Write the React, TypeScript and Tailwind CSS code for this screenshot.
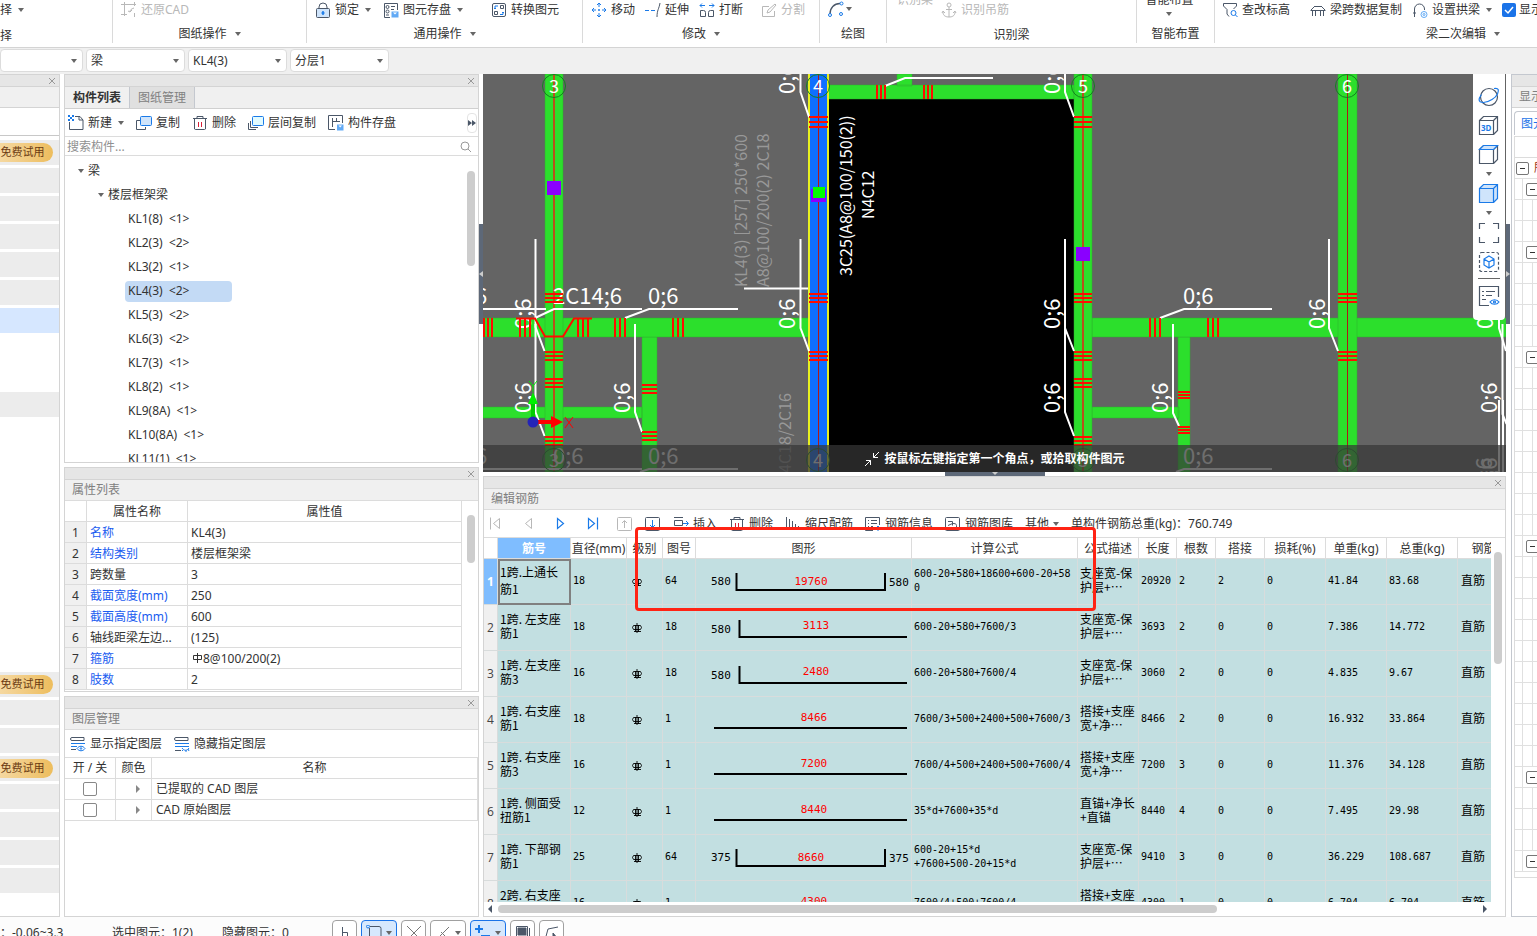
import type { ReactNode } from "react";

const SLATE = "#4b5768";
const BLUE = "#1a7ae8";

type IconProps = { name: string; muted?: boolean };

// 16px toolbar glyphs, two-tone: slate outline with a blue accent
function Icon({ name, muted }: IconProps) {
  const s = muted ? "#b8b8b8" : SLATE;
  const b = muted ? "#b8b8b8" : BLUE;
  const glyphs: Record<string, ReactNode> = {
    restore: <path d="M3.500 0v14M0 2.500h15M0 12.500h6M13.500 0v4M13 6c-3 1-4 2-4 4l-2-1m2 1 2-2M13.500 11v4" stroke={s} />,
    lock: (
      <>
        <path d="M4 7V5a4 4 0 0 1 8 0v2" stroke={s} />
        <rect x="1.500" y="6.500" width="13" height="9" rx="1" stroke={s} fill="#cfe4fb" />
        <path d="M8 9v4M6.500 11h3" stroke={b} strokeWidth="1.500" />
      </>
    ),
    store: (
      <>
        <path d="M7 15.500H1.500V1.500h13V8" stroke={s} />
        <circle cx="4.500" cy="5" r="1.500" stroke={s} />
        <circle cx="4.500" cy="9.500" r="1.500" stroke={s} />
        <path d="M8 4.500h4M8 7.500h3M3 13h3" stroke={s} />
        <path d="M8.500 9.500h7v6h-7z" fill="#62aaf5" stroke="none" />
        <path d="M10 10.500h4l-2 2z" fill="#fff" stroke="none" />
      </>
    ),
    convert: (
      <>
        <rect x="1.500" y="1.500" width="13" height="13" rx="1.500" stroke={s} />
        <path d="M9.500 3.500h3v3h-3zM3.500 9.500h3v3h-3z" stroke={s} />
        <path d="M4 7V4h3M9 12.500h3V10M3 6l1 1 1-1M11 11l1-1 1 1" stroke={b} />
      </>
    ),
    move: <path d="M8 1v4M8 11v4M1 8h4M11 8h4M6 3l2-2 2 2M6 13l2 2 2-2M3 6 1 8l2 2M13 6l2 2-2 2M8 7v2M7 8h2" stroke={b} />,
    extend: (
      <>
        <path d="M0 8.500h4M6 8.500h4" stroke={b} />
        <path d="M15 1c-1 6-3 7-3 14" stroke={s} />
      </>
    ),
    split: (
      <>
        <path d="M1 3.500h5M10 3.500h5M3 1.500l-2 2 2 2M13 1.500l2 2-2 2" stroke={b} />
        <path d="M1.500 8.500v6h5v-4a2 2 0 0 0-2-2zM14.500 8.500v6h-5v-4a2 2 0 0 1 2-2z" stroke={s} />
      </>
    ),
    divide: <path d="M8 4.500H1.500v10h12V9M6 11l1-3 7-6 1 1-6 7z" stroke={s} />,
    arc: (
      <>
        <path d="M2 13C2 7 6 2.500 12 2.500" stroke={s} strokeWidth="1.300" />
        <circle cx="2" cy="14" r="1.500" stroke={b} />
        <circle cx="13.500" cy="2.500" r="1.500" stroke={b} />
        <circle cx="13" cy="13" r="1.500" stroke={b} />
      </>
    ),
    hanger: <path d="M8 5v10M5 7.500h6M2 10c0 4 3 5 6 5s6-1 6-5M1 11l1-2 2 2M15 11l-1-2-2 2M8 1a2 2 0 1 0 .1 4A2 2 0 0 0 8 1z" stroke={s} />,
    filter: (
      <>
        <path d="M7 14.500 5 12V7.500L1.500 4V1.500h13V4l-3 3" stroke={s} />
        <circle cx="11.500" cy="11" r="2.500" stroke={b} />
        <path d="m13.500 13 2 2" stroke={b} />
      </>
    ),
    span: <path d="M.5 8.500h15M2.500 8.500V14M5.500 8.500V14M10.500 8.500V14M13.500 8.500V14M4 4.500h8M1 8l3-3M15 8l-3-3" stroke={s} />,
    arch: (
      <>
        <path d="M2.500 15V7a5 5 0 0 1 10 0v1M1 11h3" stroke={s} />
        <circle cx="12" cy="12.500" r="3" stroke="#62aaf5" />
        <circle cx="12" cy="12.500" r="1" stroke="#62aaf5" />
      </>
    ),
    create: (
      <>
        <path d="M7 1.500h5L15 5v9.500H1.500V7M11 1.500V5h4" stroke={s} />
        <path d="M0 0h2v2H0zM4 0h2v2H4zM2 2h2v2H2zM0 4h2v2H0zM4 4h2v2H4z" fill={b} stroke="none" />
      </>
    ),
    copy: (
      <>
        <path d="M4 5.500H.500v9h9V12" stroke={s} />
        <rect x="4.500" y="1.500" width="11" height="9" rx="1" stroke={b} fill="#cfe4fb" />
      </>
    ),
    trash: (
      <>
        <path d="M1 3.500h14M5 3V1.500h6V3M2.500 4v10a1 1 0 0 0 1 .500h9a1 1 0 0 0 1-.5V4" stroke={s} />
        <path d="M6.500 7v5M9.500 7v5" stroke="#d8203a" />
      </>
    ),
    layers: (
      <>
        <path d="M2.500 6v6.500H10M.500 8v6.500H8" stroke={s} />
        <rect x="4.500" y="1.500" width="11" height="9" rx="1" stroke={b} fill="#e2fbff" />
      </>
    ),
    component: (
      <>
        <path d="M7 14.500H.500V.500h14V8M4.500 3v9M4.500 6.500H12M8.500 3v3" stroke={s} />
        <path d="M9 9.500h6.500v6H9z" fill="#62aaf5" stroke="none" />
        <path d="M10.500 10.500h3.500l-1.800 2z" fill="#fff" stroke="none" />
      </>
    ),
    show: (
      <>
        <path d="M2 1.500h12v3H2a1.500 1.500 0 0 1 0-3zM1 13.500h5" stroke={s} />
        <path d="M1 7.500h14M1 10.500h6M7 12.500c2-3 6-3 8 0-2 3-6 3-8 0z" stroke={b} fill="#fff" />
        <circle cx="11" cy="12.500" r=".8" stroke={b} />
      </>
    ),
    hide: (
      <>
        <path d="M2 1.500h12v3H2a1.500 1.500 0 0 1 0-3zM1 14.500h6" stroke={s} />
        <path d="M1 7.500h14M1 10.500h14M8 12c2 3 5 3 7 0M9 14l-1 1M12 14v2M14 13l1 2" stroke={b} />
      </>
    ),
    first: <path d="M1.500 1.500v12M10.500 2.500v10l-6-5z" stroke={s} />,
    prev: <path d="M10.500 2.500v10l-6-5z" stroke={s} />,
    next: <path d="M4.500 2.500v10l6-5z" stroke={b} strokeWidth="1.200" />,
    last: <path d="M3.500 2.500v10l6-5zM12.500 1.500v12" stroke={b} strokeWidth="1.200" />,
    up: (
      <>
        <rect x=".500" y="1.500" width="14" height="13" rx="1" stroke={s} />
        <path d="M7.500 12V5M5 7l2.500-2.500L10 7" stroke={s} />
      </>
    ),
    down: (
      <>
        <rect x=".500" y="1.500" width="14" height="13" rx="1" stroke={s} />
        <path d="M7.500 4v7M5 9l2.500 2.500L10 9" stroke={b} />
      </>
    ),
    insert: (
      <>
        <path d="M1 1.500h9M1.500 4.500h8v5h-8zM1 12.500h9" stroke={s} />
        <path d="M10 7.500h5M13 5l2.500 2.500L13 10" stroke={b} />
      </>
    ),
    scale: <path d="M1.500 1v13M4.500 3v11M7.500 5v9M10.500 8v6M13.500 10v4" stroke={s} />,
    info: (
      <>
        <path d="M8 14.500H.500v-13h14V9M3 4.500h1M6 4.500h6M3 7.500h1M6 7.500h6M3 10.500h1M6 10.500h2" stroke={s} />
        <path d="m10 13 3-3 2 2M13 10v5" stroke={b} />
      </>
    ),
    library: (
      <>
        <rect x=".500" y="1.500" width="14" height="13" rx="1" stroke={s} />
        <path d="M3 5.500h4.500v4M3 9.500l4.500-2c2 0 4 0 4 2v2" stroke={s} />
      </>
    ),
  };
  return (
    <svg width="16" height="16" viewBox="0 0 16 16" fill="none" className="shrink-0" aria-hidden="true">
      {glyphs[name]}
    </svg>
  );
}

function Caret() {
  return (
    <svg width="6" height="4" viewBox="0 0 6 4" className="shrink-0" aria-hidden="true">
      <path d="M0 0h6L3 4z" fill="#666" />
    </svg>
  );
}

function ToolButton({ icon, label, muted, caret }: { icon: string; label: string; muted?: boolean; caret?: boolean }) {
  return (
    <button type="button" className={`flex h-5 shrink-0 items-center gap-1 whitespace-nowrap ${muted ? "text-[#b8b8b8]" : ""}`}>
      <Icon name={icon} muted={muted} />
      {label}
      {caret && (
        <span className="ml-0.5">
          <Caret />
        </span>
      )}
    </button>
  );
}

function RibbonGroup({ className, title, caret, children }: { className: string; title: string; caret?: boolean; children: ReactNode }) {
  return (
    <section className={`flex h-[43px] shrink-0 flex-col ${className}`}>
      <div className="flex h-5 items-center whitespace-nowrap">{children}</div>
      <div className={`flex h-5 items-center justify-center gap-2 ${caret ? "mt-1" : "mt-1.5"}`}>
        {title}
        {caret && <Caret />}
      </div>
    </section>
  );
}

function Ribbon() {
  return (
    <header className="flex h-12 shrink-0 overflow-hidden border-b border-[#d4d4d4] bg-white">
      <section className="h-[43px] w-[113px] shrink-0 border-r border-[#dadada]">
        <div className="flex h-5 items-center gap-1.5">
          择 <Caret />
        </div>
        <div className="mt-1.5 h-5 leading-5">择</div>
      </section>
      <RibbonGroup className="w-[194px] border-r border-[#dadada] [&>div:first-child]:pl-2" title="图纸操作" caret>
        <ToolButton icon="restore" label="还原CAD" muted />
      </RibbonGroup>
      <RibbonGroup className="w-[276px] border-r border-[#dadada] [&>div:first-child]:gap-3 [&>div:first-child]:pl-2" title="通用操作" caret>
        <ToolButton icon="lock" label="锁定" caret />
        <ToolButton icon="store" label="图元存盘" caret />
        <span className="w-1" />
        <ToolButton icon="convert" label="转换图元" />
      </RibbonGroup>
      <RibbonGroup className="w-[237px] border-r border-[#dadada] [&>div:first-child]:gap-2.5 [&>div:first-child]:pl-2" title="修改" caret>
        <ToolButton icon="move" label="移动" />
        <ToolButton icon="extend" label="延伸" />
        <ToolButton icon="split" label="打断" />
        <span className="ml-2">
          <ToolButton icon="divide" label="分割" muted />
        </span>
      </RibbonGroup>
      <RibbonGroup className="w-[67px] border-r border-[#dadada] [&>div:first-child]:pl-2" title="绘图">
        <button type="button" aria-label="绘图" className="flex items-center gap-0.5">
          <Icon name="arc" />
          <Caret />
        </button>
      </RibbonGroup>
      <RibbonGroup className="w-[250px] border-r border-[#dadada] [&>div:first-child]:gap-2 [&>div:first-child]:pl-2.5" title="识别梁">
        <button type="button" className="-mt-5 text-[#b8b8b8]">
          识别梁
        </button>
        <ToolButton icon="hanger" label="识别吊筋" muted />
      </RibbonGroup>
      <RibbonGroup className="w-[78px] border-r border-[#dadada] [&>div:first-child]:items-start [&>div:first-child]:justify-center" title="智能布置">
        <button type="button" className="-mt-2 mr-3 flex flex-col items-center gap-1">
          智能布置
          <Caret />
        </button>
      </RibbonGroup>
      <RibbonGroup className="w-[496px] [&>div:first-child]:pl-[7px]" title="梁二次编辑" caret>
        <ToolButton icon="filter" label="查改标高" />
        <span className="w-5" />
        <ToolButton icon="span" label="梁跨数据复制" />
        <span className="w-2.5" />
        <ToolButton icon="arch" label="设置拱梁" caret />
        <label className="relative ml-2.5 flex items-center gap-[3px]">
          <input type="checkbox" defaultChecked className="size-3.5 appearance-none rounded-xs bg-[#1a73e8]" />
          <svg width="14" height="14" viewBox="0 0 14 14" className="pointer-events-none absolute left-0" aria-hidden="true">
            <path d="m3 7 3 3 5-6" stroke="#fff" strokeWidth="1.500" fill="none" />
          </svg>
          显示
        </label>
      </RibbonGroup>
    </header>
  );
}

function Combo({ label, value, className }: { label: string; value: string; className: string }) {
  return (
    <div className={`relative flex h-[23px] items-center ${className}`}>
      <select aria-label={label} className="h-full w-full appearance-none rounded-sm border border-[#dcdcdc] bg-white pl-1 text-xs">
        <option>{value}</option>
      </select>
      <span className="pointer-events-none absolute right-1.5">
        <Caret />
      </span>
    </div>
  );
}

function TitleBar() {
  return (
    <div className="flex h-3 shrink-0 items-center justify-end border-b border-[#d4d4d4] bg-[#e6e6e6] pr-[3px]">
      <button type="button" aria-label="关闭">
        <svg width="8" height="8" viewBox="0 0 8 8" stroke="#999">
          <path d="m1 1 6 6M7 1 1 7" />
        </svg>
      </button>
    </div>
  );
}

function PanelTitle({ children }: { children: ReactNode }) {
  return <h2 className="h-[21px] shrink-0 border-b border-[#dcdcdc] bg-[#f0f0f0] pl-[7px] text-xs leading-[19px] text-[#808080]">{children}</h2>;
}

// b = trial badge, g = grey row, s = selected row, . = blank
const NAV_ROWS = "bgggggs..g.........bggbgggg".split("");

function NavStrip() {
  return (
    <aside className="flex w-[60px] shrink-0 flex-col overflow-hidden border-t border-r border-b border-[#d4d4d4] bg-white">
      <TitleBar />
      <div className="h-[21px] shrink-0 border-b border-[#d4d4d4] bg-[#f0f0f0]" />
      <div className="mb-1 h-7 shrink-0 border-b border-[#c8c8c8]" />
      {NAV_ROWS.map((kind, i) => {
        const bg = kind === "s" ? "bg-[#d6e7ff]" : kind === "." ? "" : "bg-[#ececec]";
        return (
          <div key={i} className={`mb-[3px] flex h-[25px] shrink-0 items-center ${bg}`}>
            {kind === "b" && (
              <button type="button" className="h-[19px] w-[53px] rounded-r-full bg-linear-to-r from-[#f5d8a0] to-[#edbd5c] pr-2 text-[11px] whitespace-nowrap text-[#6b3a12]">
                免费试用
              </button>
            )}
          </div>
        );
      })}
    </aside>
  );
}

const BEAMS = ["KL1(8)  <1>", "KL2(3)  <2>", "KL3(2)  <1>", "KL4(3)  <2>", "KL5(3)  <2>", "KL6(3)  <2>", "KL7(3)  <1>", "KL8(2)  <1>", "KL9(8A)  <1>", "KL10(8A)  <1>", "KL11(1)  <1>"];

function ComponentPanel() {
  return (
    <section className="flex min-h-0 flex-1 flex-col border border-[#d4d4d4] bg-white">
      <TitleBar />
      <div className="flex h-[22px] shrink-0 border-b border-[#d0d0d0] bg-[#f0f0f0]">
        <button type="button" className="w-[65px] border-r border-[#c4c8cf] font-bold">
          构件列表
        </button>
        <button type="button" className="w-[65px] border-r border-[#c4c8cf] bg-[#e0e0e0] text-[#808080]">
          图纸管理
        </button>
      </div>
      <div className="flex h-7 shrink-0 items-center gap-3 border-b border-[#dcdcdc] pt-px pl-[3px]">
        <ToolButton icon="create" label="新建" caret />
        <ToolButton icon="copy" label="复制" />
        <ToolButton icon="trash" label="删除" />
        <ToolButton icon="layers" label="层间复制" />
        <ToolButton icon="component" label="构件存盘" />
        <button type="button" aria-label="更多" className="mr-px ml-auto flex h-5 w-2.5 items-center justify-center rounded-sm border border-[#e4e4e4]">
          <svg width="8" height="6" viewBox="0 0 8 6" fill={SLATE} className="shrink-0">
            <path d="m0 0 4 3-4 3zM4 0l4 3-4 3z" />
          </svg>
        </button>
      </div>
      <div className="flex h-[19px] shrink-0 items-center border-b border-[#dcdcdc] pt-px pr-[7px]">
        <input aria-label="搜索构件" placeholder="搜索构件..." className="min-w-0 flex-1 pl-0.5 text-xs outline-none placeholder:text-[#909090]" />
        <svg width="11" height="11" viewBox="0 0 11 11" fill="none" stroke="#999">
          <circle cx="5" cy="5" r="4" />
          <path d="m8 8 3 3" />
        </svg>
      </div>
      <div className="flex min-h-0 flex-1 overflow-hidden pt-[3px]">
        <ul className="flex-1">
          <li className="flex h-6 items-center gap-1 pl-[13px]">
            <Caret />
            梁
          </li>
          <li className="flex h-6 items-center gap-1 pl-[33px]">
            <Caret />
            楼层框架梁
          </li>
          {BEAMS.map((beam) => (
            <li key={beam} className="flex h-6 items-center pl-[60px]">
              <span className={`h-[21px] w-[107px] rounded-sm pl-[3px] leading-5 whitespace-pre ${beam.startsWith("KL4") ? "bg-[#c3daf5]" : ""}`}>{beam}</span>
            </li>
          ))}
        </ul>
        <div className="mt-3 mr-[3px] h-[95px] w-2 rounded-full bg-[#cdcdcd]" />
      </div>
    </section>
  );
}

const PROPS: [string, string, boolean][] = [
  ["名称", "KL4(3)", true],
  ["结构类别", "楼层框架梁", true],
  ["跨数量", "3", false],
  ["截面宽度(mm)", "250", true],
  ["截面高度(mm)", "600", true],
  ["轴线距梁左边...", "(125)", false],
  ["箍筋", "8@100/200(2)", true],
  ["肢数", "2", true],
];

function PropertyPanel() {
  return (
    <section className="flex h-[225px] shrink-0 flex-col overflow-hidden border border-[#d4d4d4] bg-white">
      <TitleBar />
      <PanelTitle>属性列表</PanelTitle>
      <div className="flex min-h-0 flex-1 overflow-hidden">
        <table className="h-fit flex-1 table-fixed border-separate border-spacing-0">
          <colgroup>
            <col className="w-[22px]" />
            <col className="w-[101px]" />
            <col />
          </colgroup>
          <thead>
            <tr className="h-[21px] [&>th]:border-r [&>th]:border-b [&>th]:border-[#dcdcdc] [&>th]:p-0 [&>th]:pt-px [&>th]:font-normal">
              <th />
              <th>属性名称</th>
              <th>属性值</th>
            </tr>
          </thead>
          <tbody>
            {PROPS.map(([name, value, link], i) => (
              <tr key={name} className="h-[21px] [&>td]:border-r [&>td]:border-b [&>td]:border-[#dcdcdc] [&>td]:p-0 [&>td]:pt-px">
                <td className="bg-[#f0f0f0] text-center">{i + 1}</td>
                <td className={link ? "text-[#1a5cf0]" : ""}>
                  <span className="pl-[3px]">{name}</span>
                </td>
                <td>
                  <span className="flex items-center pl-[3px]">
                    {name === "箍筋" && (
                      <svg width="12" height="12" viewBox="0 0 12 12" stroke="#333" fill="none" aria-hidden="true">
                        <path d="M6.500 0v10M2.500 2.500h8v4h-8z" />
                      </svg>
                    )}
                    {value}
                  </span>
                </td>
              </tr>
            ))}
          </tbody>
        </table>
        <div className="mt-3.5 mr-[3px] ml-[5px] h-12 w-2 rounded-full bg-[#cdcdcd]" />
      </div>
    </section>
  );
}

function LayerPanel() {
  return (
    <section className="flex h-[221px] shrink-0 flex-col border border-[#d4d4d4] bg-white">
      <TitleBar />
      <PanelTitle>图层管理</PanelTitle>
      <div className="flex h-7 shrink-0 items-center gap-3 border-b border-[#dcdcdc] pt-px pl-[5px]">
        <ToolButton icon="show" label="显示指定图层" />
        <ToolButton icon="hide" label="隐藏指定图层" />
      </div>
      <table className="w-full table-fixed border-separate border-spacing-0">
        <thead>
          <tr className="h-[21px] [&>th]:border-r [&>th]:border-b [&>th]:border-[#dcdcdc] [&>th]:p-0 [&>th]:font-normal">
            <th className="w-[51px]">开 / 关</th>
            <th className="w-9">颜色</th>
            <th>名称</th>
          </tr>
        </thead>
        <tbody>
          {["已提取的 CAD 图层", "CAD 原始图层"].map((layer) => (
            <tr key={layer} className="h-[21px] [&>td]:border-r [&>td]:border-b [&>td]:border-[#dcdcdc] [&>td]:p-0">
              <td>
                <input type="checkbox" aria-label={layer} className="mx-auto block size-3.5 appearance-none rounded-xs border border-[#888] bg-white" />
              </td>
              <td>
                <svg width="4" height="8" viewBox="0 0 4 8" className="ml-5" fill="#888">
                  <path d="m0 0 4 4-4 4z" />
                </svg>
              </td>
              <td>
                <span className="pl-1">{layer}</span>
              </td>
            </tr>
          ))}
        </tbody>
      </table>
    </section>
  );
}

// [x start, x end, first tick y, spacing]
const H_TICKS: [number, number, number, number][] = [
  [545, 563, 294, 4], [545, 563, 352, 4], [545, 563, 379, 4], [545, 563, 437, 4],
  [809, 828, 117, 5], [809, 828, 294, 4], [809, 828, 352, 4],
  [1074, 1092, 117, 5], [1074, 1092, 294, 4], [1074, 1092, 352, 4], [1074, 1092, 379, 4], [1074, 1092, 437, 4],
  [1338, 1357, 294, 4], [1338, 1357, 352, 4],
  [642, 657, 385, 4], [642, 657, 432, 4], [1178, 1190, 392, 3], [1178, 1190, 427, 3],
];

// [y start, y end, first tick x, spacing]
const V_TICKS: [number, number, number, number][] = [
  [318, 337, 484, 4], [318, 337, 520, 5], [318, 337, 578, 5], [318, 337, 615, 5], [318, 337, 673, 5],
  [318, 337, 1150, 5], [318, 337, 1208, 5], [85, 99, 877, 4], [85, 99, 924, 4],
];

const LEADERS = [
  "M535.500 239v88l9 24", "M535.500 324v88l9 24", "M635 324v88l7 20", "M800.500 74v18l8.500 25", "M800.500 239v89l8.500 23",
  "M1065 74v18l9 25", "M1065 239v89l9 23", "M1065 324v88l9 24", "M1173 324v89l6 13", "M1329 239v89l9 23",
  "M1499 318v10l7 23", "M1502.500 324v90l4 10", "M1499 400v72", "M1503 400v72",
  "M483 309h63M535 318l19-9h88", "M625 318l24-9h89", "M744 288.500h64", "M1160 318l24-9h88", "M885 86l20-8h88",
  "M483 469h159M640 472l9-3h89", "M1176 472l8-3h88",
];

const SIDE_NOTES: [number, number][] = [
  [531, 329], [531, 413], [630, 413], [795, 94], [795, 329], [1060, 94], [1060, 329], [1060, 413], [1168, 413], [1325, 329], [1493, 329], [1497, 413], [1492, 488], [1497, 488],
];

const AXES: [number, string][] = [[554, "3"], [818, "4"], [1083, "5"], [1347, "6"]];

function Drawing() {
  return (
    <svg viewBox="483 74 1023 398" preserveAspectRatio="xMinYMin slice" className="block h-full w-full bg-[#646464] font-['Noto_Sans_CJK_SC',sans-serif]">
      <path d="M828 99h246v373H828z" fill="#000" />
      <g fill="#2cdf2c" stroke="#2fae2f" strokeWidth=".5">
        <path d="M483 407h159v11H483zM1092 407h87v11h-87zM642 337h15v135h-15zM1178 337h12v135h-12z" />
        <path d="M483 318h326v19H483zM1092 318h414v19h-414zM828 85h246v14H828zM897 74h15v12h-15z" />
        <path d="M545 74h18v398h-18zM1074 74h18v398h-18zM1338 74h19v398h-19z" />
      </g>
      <path d="M808 74h21v398h-21z" fill="#e8f020" />
      <path d="M810 74h17v398h-17z" fill="#0f6fff" />
      <path d="M554 74v398M1083 74v398" stroke="#b8501c" strokeWidth="2" />
      <path d="M818.500 74v398M1347.500 74v398" stroke="#b01818" />
      <g fill="#8a00ff">
        <path d="M547 181h14v14h-14zM1076 247h14v14h-14zM811 189h15v13h-15z" />
      </g>
      <path d="M813 187h12v11h-12z" fill="#00ff00" />
      <g fill="none" stroke="#fff" strokeWidth="2">
        {LEADERS.map((d) => (
          <path key={d} d={d} />
        ))}
      </g>
      <g fill="#fff" fontSize="22">
        <text x="475" y="304">6</text>
        <text x="553" y="304">2C14;6</text>
        <text x="648" y="304">0;6</text>
        <text x="1183" y="304">0;6</text>
        <text x="475" y="464">6</text>
        <text x="553" y="464">0;6</text>
        <text x="648" y="464">0;6</text>
        <text x="1183" y="464">0;6</text>
        {SIDE_NOTES.map(([x, y]) => (
          <text key={`${x}-${y}`} transform={`translate(${x} ${y}) rotate(-90)`}>0;6</text>
        ))}
      </g>
      <g fill="#989898" fontSize="16">
        <text transform="translate(747 287) rotate(-90)">KL4(3) [257] 250*600</text>
        <text transform="translate(769 287) rotate(-90)">A8@100/200(2) 2C18</text>
        <text transform="translate(791 473) rotate(-90)">4C18/2C16</text>
      </g>
      <g fill="#fff" fontSize="16">
        <text transform="translate(852 276) rotate(-90)">3C25(A8@100/150(2))</text>
        <text transform="translate(874 219) rotate(-90)">N4C12</text>
      </g>
      <g stroke="#ff0c00" strokeWidth="2" fill="none">
        {H_TICKS.map(([x1, x2, y, gap]) => (
          <path key={`${x1}-${y}`} d={`M${x1} ${y}H${x2}M${x1} ${y + gap}H${x2}M${x1} ${y + gap * 2}H${x2}`} />
        ))}
        {V_TICKS.map(([y1, y2, x, gap]) => (
          <path key={`${x}-${y1}`} d={`M${x} ${y1}V${y2}M${x + gap} ${y1}V${y2}M${x + gap * 2} ${y1}V${y2}`} />
        ))}
        <path d="M516 318.500h19l10 18h18l11-18h18" />
      </g>
      {AXES.map(([x, label]) => (
        <g key={label} fontSize="18" textAnchor="middle" fill="#fff">
          <circle cx={x} cy="86" r="11.500" fill="none" stroke="#12801f" />
          <circle cx={x} cy="460" r="11.500" fill="none" stroke="#12801f" />
          <text x={x} y="93">{label}</text>
          <text x={x} y="467">{label}</text>
        </g>
      ))}
      <path d="M533 422v-20" stroke="#0c0" strokeWidth="4" />
      <path d="M528 404h10l-5-12z" fill="#00f000" />
      <path d="M533 422h22" stroke="#f00" strokeWidth="4" />
      <path d="M551 416v12l12-6z" fill="#f00" />
      <circle cx="533" cy="422" r="5.500" fill="#2424b8" />
      <path d="M529 381l4 5 4-5M533 386v6" stroke="#00f000" fill="none" />
      <path d="M565 417l8 11M573 417l-8 11" stroke="#f00" />
    </svg>
  );
}

const CUBE = "M1.500 5.500h14v14h-14zM1.500 5.500l4-4h14v14l-4 4M15.500 5.500l4-4";

function ViewButton({ label, children }: { label: string; children: ReactNode }) {
  return (
    <button type="button" aria-label={label} className="flex h-[29px] items-center">
      <svg width="22" height="22" viewBox="0 0 22 22" fill="none" stroke={SLATE} strokeWidth="1.200">
        {children}
      </svg>
    </button>
  );
}

function ViewToolbar() {
  return (
    <div className="absolute top-0 right-px flex h-[246px] w-8 flex-col items-center rounded-b-sm bg-white pt-2">
      <ViewButton label="动态观察">
        <circle cx="11" cy="11" r="8.500" />
        <path d="M16 2.500c5-1 5 2 3.500 5.500-2 4-8 8-14 8.500-6 0-5-4-2-8" stroke={BLUE} />
      </ViewButton>
      <ViewButton label="三维">
        <path d={CUBE} />
        <text x="3" y="16" fill={BLUE} stroke="none" fontSize="8" fontWeight="bold">3D</text>
      </ViewButton>
      <ViewButton label="俯视">
        <path d={CUBE} />
        <path d="M1.500 5.500l4-4h14l-4 4z" stroke={BLUE} fill="#cfe4fb" />
      </ViewButton>
      <span className="flex h-2.5 items-center">
        <Caret />
      </span>
      <ViewButton label="实体显示">
        <path d={CUBE} stroke={BLUE} fill="#cfe4fb" />
      </ViewButton>
      <span className="flex h-2.5 items-center">
        <Caret />
      </span>
      <ViewButton label="全屏">
        <path d="M1.500 7V1.500H7M15 1.500h5.500V7M20.500 15v5.500H15M7 20.500H1.500V15" />
      </ViewButton>
      <ViewButton label="局部三维">
        <rect x="1.500" y="1.500" width="19" height="19" rx="2" strokeDasharray="3 2" />
        <path d="m11 5 5 3v6l-5 3-5-3V8zM6 8l5 3 5-3M11 11v6" stroke={BLUE} />
      </ViewButton>
      <span className="my-0.5 h-px w-[22px] shrink-0 bg-[#666]" />
      <ViewButton label="显示设置">
        <path d="M11 20.500H1.500v-19h19V12M4 6.500h2M8 6.500h9M4 10.500h2M8 10.500h6M4 14.500h4" />
        <path d="M12 17c2-3 7-3 9 0-2 3-7 3-9 0z" stroke={BLUE} fill="#fff" />
        <circle cx="16.500" cy="17" r="1" stroke={BLUE} />
      </ViewButton>
    </div>
  );
}

type Shape = { kind: "u" | "l" | "i"; main: string; side?: string };
type Bar = { no: string[]; dia: string; fig: string; shape: Shape; formula: string[]; desc: string[]; nums: string[] };

const BARS: Bar[] = [
  { no: ["1跨.上通长", "筋1"], dia: "18", fig: "64", shape: { kind: "u", main: "19760", side: "580" }, formula: ["600-20+580+18600+600-20+58", "0"], desc: ["支座宽-保", "护层+⋯"], nums: ["20920", "2", "2", "0", "41.84", "83.68"] },
  { no: ["1跨. 左支座", "筋1"], dia: "18", fig: "18", shape: { kind: "l", main: "3113", side: "580" }, formula: ["600-20+580+7600/3"], desc: ["支座宽-保", "护层+⋯"], nums: ["3693", "2", "0", "0", "7.386", "14.772"] },
  { no: ["1跨. 左支座", "筋3"], dia: "16", fig: "18", shape: { kind: "l", main: "2480", side: "580" }, formula: ["600-20+580+7600/4"], desc: ["支座宽-保", "护层+⋯"], nums: ["3060", "2", "0", "0", "4.835", "9.67"] },
  { no: ["1跨. 右支座", "筋1"], dia: "18", fig: "1", shape: { kind: "i", main: "8466" }, formula: ["7600/3+500+2400+500+7600/3"], desc: ["搭接+支座", "宽+净⋯"], nums: ["8466", "2", "0", "0", "16.932", "33.864"] },
  { no: ["1跨. 右支座", "筋3"], dia: "16", fig: "1", shape: { kind: "i", main: "7200" }, formula: ["7600/4+500+2400+500+7600/4"], desc: ["搭接+支座", "宽+净⋯"], nums: ["7200", "3", "0", "0", "11.376", "34.128"] },
  { no: ["1跨. 侧面受", "扭筋1"], dia: "12", fig: "1", shape: { kind: "i", main: "8440" }, formula: ["35*d+7600+35*d"], desc: ["直锚+净长", "+直锚"], nums: ["8440", "4", "0", "0", "7.495", "29.98"] },
  { no: ["1跨. 下部钢", "筋1"], dia: "25", fig: "64", shape: { kind: "u", main: "8660", side: "375" }, formula: ["600-20+15*d", "+7600+500-20+15*d"], desc: ["支座宽-保", "护层+⋯"], nums: ["9410", "3", "0", "0", "36.229", "108.687"] },
  { no: ["2跨. 右支座", "筋1"], dia: "16", fig: "1", shape: { kind: "i", main: "4300" }, formula: ["7600/4+500+7600/4"], desc: ["搭接+支座", "宽+净⋯"], nums: ["4300", "1", "0", "0", "6.704", "6.704"] },
];

const HEADS = ["直径(mm)", "级别", "图号", "图形", "计算公式", "公式描述", "长度", "根数", "搭接", "损耗(%)", "单重(kg)", "总重(kg)", "钢筋"];

function BarShape({ shape }: { shape: Shape }) {
  const line = { u: "M40.500 14v17H189V14", l: "M43.500 15v17H211", i: "M18 31h193" }[shape.kind];
  const x = { u: 115, l: 120, i: 118 }[shape.kind];
  return (
    <svg width="215" height="45" viewBox="0 0 215 45" className="font-['DejaVu_Sans_Mono',monospace] text-[11px]">
      <path d={line} fill="none" stroke="#000" strokeWidth="2" />
      <text x={x} y={shape.kind === "u" ? 26 : 24} textAnchor="middle" fill="#f00">{shape.main}</text>
      {shape.side && <text x="15" y={shape.kind === "u" ? 26 : 28}>{shape.side}</text>}
      {shape.kind === "u" && <text x="193" y="27">{shape.side}</text>}
    </svg>
  );
}

function RebarTable() {
  return (
    <table className="w-[1026px] table-fixed border-separate border-spacing-0">
      <colgroup>
        <col className="w-3.5" />
        <col className="w-[73px]" />
        <col className="w-14" />
        <col className="w-9" />
        <col className="w-[33px]" />
        <col className="w-[216px]" />
        <col className="w-[166px]" />
        <col className="w-[61px]" />
        <col className="w-[38px]" />
        <col className="w-[39px]" />
        <col className="w-[49px]" />
        <col className="w-[61px]" />
        <col className="w-[61px]" />
        <col className="w-[71px]" />
        <col className="w-[52px]" />
      </colgroup>
      <thead>
        <tr className="h-[21px] [&>th]:border-r [&>th]:border-b [&>th]:border-[#dcdcdc] [&>th]:p-0 [&>th]:pt-px [&>th]:font-normal [&>th]:whitespace-nowrap">
          <th />
          <th className="bg-[#7fbdff] text-white">
            <b>筋号</b>
          </th>
          {HEADS.map((head) => (
            <th key={head}>{head}</th>
          ))}
        </tr>
      </thead>
      <tbody className="font-['DejaVu_Sans_Mono','Noto_Sans_CJK_SC',monospace] text-[10px] leading-[14px] text-black">
        {BARS.map((bar, i) => (
          <tr key={i} className="h-[46px] [&>td]:border-r [&>td]:border-b [&>td]:border-[#d8dcdc] [&>td]:p-0">
            <td className={`pt-px text-center font-['Open_Sans',sans-serif] text-xs ${i === 0 ? "bg-[#7fbdff] font-bold text-white" : "bg-[#f0f0f0] text-[#444]"}`}>{i + 1}</td>
            <td className={`bg-[#c2dfe1] font-['Noto_Sans_CJK_SC',sans-serif] text-xs whitespace-nowrap ${i === 0 ? "leading-[17px] outline-2 -outline-offset-2 outline-[#808080]" : "leading-[14px]"}`}>
              <div className="pb-[3px] pl-0.5">{bar.no.map((line) => <div key={line}>{line}</div>)}</div>
            </td>
            <td className="bg-[#c2dfe1]">
              <div className="pb-0.5 pl-0.5">{bar.dia}</div>
            </td>
            <td className="bg-[#c2dfe1]">
              <svg width="12" height="12" viewBox="0 0 12 12" fill="none" stroke="#000" className="ml-1" role="img" aria-label="三级钢">
                <path d="M4.500 3v7M7.500 3v7M6 1v10M2.500 3.500h7l1 2-1 2h-7l-1-2zM3 9.500h7" strokeWidth=".9" />
              </svg>
            </td>
            <td className="bg-[#c2dfe1]">
              <div className="pb-0.5 pl-0.5">{bar.fig}</div>
            </td>
            <td className="bg-[#c2dfe1]">
              <BarShape shape={bar.shape} />
            </td>
            <td className="bg-[#c2dfe1] whitespace-nowrap">
              <div className="pb-0.5 pl-0.5">{bar.formula.map((line) => <div key={line}>{line}</div>)}</div>
            </td>
            <td className="bg-[#c2dfe1] font-['Noto_Sans_CJK_SC',sans-serif] text-xs leading-[14px] whitespace-nowrap">
              <div className="pb-[3px] pl-0.5">{bar.desc.map((line) => <div key={line}>{line}</div>)}</div>
            </td>
            {bar.nums.map((n, j) => (
              <td key={j} className="bg-[#c2dfe1]">
                <div className="pb-0.5 pl-0.5">{n}</div>
              </td>
            ))}
            <td className="bg-[#c2dfe1] text-xs">
              <div className="pb-0.5 pl-[3px]">直筋</div>
            </td>
          </tr>
        ))}
      </tbody>
    </table>
  );
}

function RebarPanel() {
  const nav: [string, string, boolean][] = [["first", "首条", true], ["prev", "上一条", true], ["next", "下一条", false], ["last", "末条", false], ["up", "上移", true]];
  return (
    <section className="relative flex h-[441px] shrink-0 flex-col border border-[#d4d4d4] bg-white">
      <TitleBar />
      <PanelTitle>编辑钢筋</PanelTitle>
      <div className="flex h-7 shrink-0 items-center gap-3 border-b border-[#dcdcdc] pl-[5px]">
        <div className="flex gap-4">
          {nav.map(([icon, label, muted]) => (
            <button key={icon} type="button" aria-label={label}>
              <Icon name={icon} muted={muted} />
            </button>
          ))}
        </div>
        <button type="button" aria-label="下移">
          <Icon name="down" />
        </button>
        <ToolButton icon="insert" label="插入" />
        <ToolButton icon="trash" label="删除" />
        <ToolButton icon="scale" label="缩尺配筋" />
        <ToolButton icon="info" label="钢筋信息" />
        <ToolButton icon="library" label="钢筋图库" />
        <button type="button" className="flex items-center gap-1">
          其他 <Caret />
        </button>
        <span className="whitespace-nowrap">单构件钢筋总重(kg)：760.749</span>
      </div>
      <div className="flex min-h-0 flex-1">
        <div className="min-w-0 flex-1 overflow-hidden">
          <RebarTable />
        </div>
        <div className="mt-3.5 mr-[3px] ml-[3px] h-[112px] w-2 rounded-full bg-[#cdcdcd]" />
      </div>
      <div className="flex h-3.5 shrink-0 items-center pr-[18px] pl-1">
        <svg width="4" height="8" viewBox="0 0 4 8" fill={SLATE}>
          <path d="M4 0 0 4l4 4z" />
        </svg>
        <div className="ml-1.5 h-2 w-[72%] rounded-full bg-[#cdcdcd]" />
        <svg width="4" height="8" viewBox="0 0 4 8" fill={SLATE} className="ml-auto">
          <path d="m0 0 4 4-4 4z" />
        </svg>
      </div>
      <div className="pointer-events-none absolute top-[50px] left-[151px] h-[84px] w-[461px] rounded-sm border-3 border-[#ff2314]" />
    </section>
  );
}

const TREE_ROWS = Array.from({ length: 34 }, (_, i) => i);
const TREE_BRANCHES = [1, 4, 9, 18, 29, 33];

function Toggle() {
  return (
    <button type="button" aria-label="折叠" className="flex size-[13px] shrink-0 items-center justify-center rounded-xs border border-[#777] bg-white">
      <span className="h-px w-[5px] bg-[#333]" />
    </button>
  );
}

function DisplayPanel() {
  return (
    <aside className="flex w-[26px] shrink-0 flex-col overflow-hidden border-t border-b border-l border-[#c4c8cf] bg-white whitespace-nowrap">
      <div className="h-3 shrink-0 border-b border-[#d4d4d4] bg-[#e6e6e6]" />
      <h2 className="h-[21px] shrink-0 border-b border-[#d4d4d4] bg-[#f0f0f0] pl-[7px] text-xs leading-5 text-[#808080]">显示设置</h2>
      <button type="button" className="mt-[3px] ml-0.5 h-6 shrink-0 rounded-tl-sm border-t border-l border-[#c4c8cf] pl-1.5 text-left text-[#1a73e8]">
        图元显示
      </button>
      <ul className="mt-px ml-0.5 h-[742px] shrink-0 overflow-hidden border border-r-0 border-[#dcdcdc]">
        <li className="h-[21px] border-b border-[#dcdcdc]" />
        {TREE_ROWS.map((i) => (
          <li key={i} className="flex h-[21px] items-center border-b border-[#e0e0e0]">
            {i === 0 && (
              <span className="flex items-center gap-[5px] pl-px text-[#a04020]">
                <Toggle />
                所有构件
              </span>
            )}
            {i > 0 && (
              <span className="ml-[7px] flex h-full items-center border-l border-[#e0e0e0]">
                {TREE_BRANCHES.includes(i) ? <span className="pl-[3px]"><Toggle /></span> : <span className="ml-[9px] h-full w-2 border-l border-[#e0e0e0]" />}
              </span>
            )}
          </li>
        ))}
      </ul>
    </aside>
  );
}

function StatusButton({ wide, active, label, children }: { wide?: boolean; active?: boolean; label: string; children: ReactNode }) {
  return (
    <button
      type="button"
      aria-label={label}
      className={`flex h-[25px] items-center justify-center gap-1 rounded-sm border ${wide ? "w-9" : "w-[25px]"} ${active ? "border-[#1a73e8] bg-[#d6e8fd]" : "border-[#a0a0a0] bg-white"}`}
    >
      <svg width="16" height="16" viewBox="0 0 16 16" fill="none" stroke={SLATE} className="shrink-0">
        {children}
      </svg>
      {wide && <Caret />}
    </button>
  );
}

function StatusBar() {
  return (
    <footer className="flex h-[19px] shrink-0 items-start overflow-hidden bg-[#fcfcfc] pt-[3px]">
      <span className="mt-[5px] w-28 whitespace-pre">：-0.06~3.3</span>
      <span className="mt-[5px] w-[110px]">选中图元：1(2)</span>
      <span className="mt-[5px] w-[110px]">隐藏图元：0</span>
      <div className="flex shrink-0 gap-1">
        <StatusButton label="正交">
          <path d="M5.500 2v12M5.500 7.500h5V14" />
        </StatusButton>
        <StatusButton label="对象捕捉" wide active>
          <path d="M3.500 3v12M4 1.500h9a2 2 0 0 1 2 2V15" />
          <circle cx="2" cy="1.500" r="1.500" stroke={BLUE} />
        </StatusButton>
        <StatusButton label="交点">
          <path d="m1 1 14 14M15 1 1 15" stroke="#777" />
        </StatusButton>
        <StatusButton label="中点" wide>
          <path d="M1 15 14 2M6 7l4 4" stroke="#777" />
        </StatusButton>
        <StatusButton label="动态输入" wide active>
          <path d="M4 0v8M0 4h8M6 11h9" stroke={BLUE} strokeWidth="2" />
        </StatusButton>
        <StatusButton label="选择">
          <path d="M3 3h8v7H3z" fill={SLATE} />
          <path d="M1.500 1.500h11v10h-11zM14.500 3v10l-3-2" />
        </StatusButton>
        <StatusButton label="多边形">
          <path d="M1 15 4 4l10-2" />
          <path d="m9 8 5 6H9z" fill={SLATE} />
        </StatusButton>
      </div>
    </footer>
  );
}

export default function App() {
  return (
    <div className="flex h-screen flex-col overflow-hidden bg-white font-['Noto_Sans','Noto_Sans_CJK_SC',sans-serif] text-xs text-[#333]">
      <Ribbon />
      <div className="flex h-[26px] shrink-0 gap-[3px] bg-[#f0f0f0] pt-px">
        <Combo label="楼层" value="" className="w-[83px]" />
        <Combo label="构件类型" value="梁" className="w-[99px]" />
        <Combo label="构件" value="KL4(3)" className="w-[99px]" />
        <Combo label="分层" value="分层1" className="w-[99px]" />
      </div>
      <main className="flex min-h-0 flex-1">
        <NavStrip />
        <div className="ml-1 flex w-[415px] shrink-0 flex-col gap-1">
          <ComponentPanel />
          <PropertyPanel />
          <LayerPanel />
        </div>
        <button type="button" aria-label="收起左侧" className="mt-[150px] flex h-[100px] w-1 shrink-0 items-center bg-[#5d6878]">
          <svg width="4" height="6" viewBox="0 0 4 6" fill="#ccc">
            <path d="M4 0 0 3l4 3z" />
          </svg>
        </button>
        <div className="flex min-w-0 flex-1 flex-col">
          <div className="relative min-h-0 flex-1 overflow-hidden">
            <Drawing />
            <p className="absolute inset-x-0 bottom-0 flex h-[27px] items-center justify-center gap-1 bg-[#363636]/72 font-bold text-white">
              <svg width="16" height="16" viewBox="0 0 16 16" fill="none" stroke="#fff">
                <path d="M15 1 9.500 6.500M9.500 2v4.500H14M1 15l5.500-5.500M2 9.500h4.500V14" />
              </svg>
              按鼠标左键指定第一个角点，或拾取构件图元
            </p>
            <ViewToolbar />
          </div>
          <button type="button" aria-label="收起下方" className="mx-auto flex h-1 w-[100px] shrink-0 justify-center bg-[#5d6878]">
            <svg width="6" height="4" viewBox="0 0 6 4" fill="#ccc">
              <path d="M0 0h6L3 3z" />
            </svg>
          </button>
          <RebarPanel />
        </div>
        <button type="button" aria-label="收起右侧" className="mt-[150px] mr-px flex h-[100px] w-1 shrink-0 items-center bg-[#5d6878]">
          <svg width="4" height="6" viewBox="0 0 4 6" fill="#ccc">
            <path d="m0 0 4 3-4 3z" />
          </svg>
        </button>
        <DisplayPanel />
      </main>
      <StatusBar />
    </div>
  );
}
